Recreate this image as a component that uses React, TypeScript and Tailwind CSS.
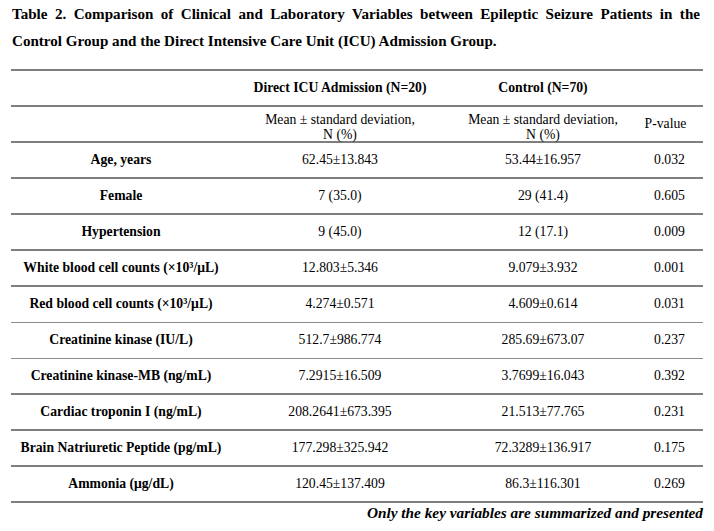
const rows: { label: string; icu: string; control: string; p: string; thin?: boolean }[] = [
  { label: 'Age, years', icu: '62.45±13.843', control: '53.44±16.957', p: '0.032' },
  { label: 'Female', icu: '7 (35.0)', control: '29 (41.4)', p: '0.605' },
  { label: 'Hypertension', icu: '9 (45.0)', control: '12 (17.1)', p: '0.009' },
  { label: 'White blood cell counts (×10³/μL)', icu: '12.803±5.346', control: '9.079±3.932', p: '0.001' },
  { label: 'Red blood cell counts (×10³/μL)', icu: '4.274±0.571', control: '4.609±0.614', p: '0.031', thin: true },
  { label: 'Creatinine kinase (IU/L)', icu: '512.7±986.774', control: '285.69±673.07', p: '0.237', thin: true },
  { label: 'Creatinine kinase-MB (ng/mL)', icu: '7.2915±16.509', control: '3.7699±16.043', p: '0.392' },
  { label: 'Cardiac troponin I (ng/mL)', icu: '208.2641±673.395', control: '21.513±77.765', p: '0.231' },
  { label: 'Brain Natriuretic Peptide (pg/mL)', icu: '177.298±325.942', control: '72.3289±136.917', p: '0.175' },
  { label: 'Ammonia (μg/dL)', icu: '120.45±137.409', control: '86.3±116.301', p: '0.269' },
]

const cols = 'grid grid-cols-[220px_218px_188px_65px] items-center text-center'

export default function App() {
  return (
    <div
      className="w-[714px] h-[531px] bg-white text-black overflow-hidden"
      style={{ fontFamily: '"Liberation Serif", "Times New Roman", serif' }}
    >
      {/* Title */}
      <div className="pl-[12px] pr-[14px] pt-[1px] text-[15.1px] leading-[27px] font-bold text-justify">
        Table 2. Comparison of Clinical and Laboratory Variables between Epileptic Seizure Patients in the Control
        Group and the Direct Intensive Care Unit (ICU) Admission Group.
      </div>

      {/* Table */}
      <div className="mx-[11px] mt-[14px] border-t-2 border-[#7f7f7f] text-[13.7px]">
        <div className={`${cols} h-[36px] border-b-2 border-[#7f7f7f] font-bold`}>
          <div />
          <div>Direct ICU Admission (N=20)</div>
          <div>Control (N=70)</div>
          <div />
        </div>
        <div className={`${cols} h-[36px] border-b-2 border-[#7f7f7f]`}>
          <div />
          <div className="mt-[5px] leading-[15px]">
            Mean ± standard deviation,
            <br />
            N (%)
          </div>
          <div className="mt-[5px] leading-[15px]">
            Mean ± standard deviation,
            <br />
            N (%)
          </div>
          <div className="pr-[8px]">P-value</div>
        </div>
        {rows.map((r) => (
          <div
            key={r.label}
            className={`${cols} h-[36px] ${r.thin ? 'border-b border-[#8c8c8c]' : 'border-b-2 border-[#7f7f7f]'}`}
          >
            <div className="font-bold">{r.label}</div>
            <div>{r.icu}</div>
            <div>{r.control}</div>
            <div>{r.p}</div>
          </div>
        ))}
        <div className="text-right text-[15.3px] font-bold italic leading-[20px]">
          Only the key variables are summarized and presented
        </div>
      </div>
    </div>
  )
}
